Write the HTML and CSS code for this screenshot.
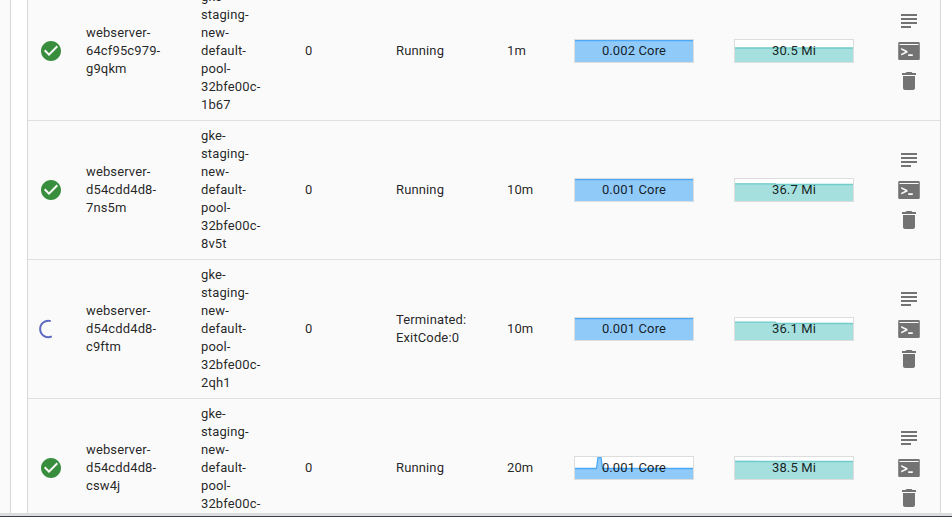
FILE: index.html
```html
<!DOCTYPE html>
<html lang="en">
<head>
<meta charset="utf-8">
<title>Pods</title>
<link rel="stylesheet" href="styles.css">
</head>
<body>
<svg class="defs" width="0" height="0">
  <symbol id="ok" viewBox="0 0 24 24"><path d="M12 2C6.48 2 2 6.48 2 12s4.48 10 10 10 10-4.48 10-10S17.52 2 12 2zm-2 15l-5-5 1.41-1.41L10 14.17l7.59-7.59L19 8l-9 9z"/></symbol>
  <symbol id="logs" viewBox="0 0 24 24"><path d="M14 17H4v2h10v-2zm6-8H4v2h16V9zM4 15h16v-2H4v2zM4 5v2h16V5H4z"/></symbol>
  <symbol id="exec" viewBox="0 0 24 24"><path fill-rule="evenodd" d="M2.500 3h19A1.300 1.300 0 0 1 22.800 4.300v15.400a1.300 1.300 0 0 1-1.300 1.300h-19a1.300 1.300 0 0 1-1.300-1.300V4.300A1.300 1.300 0 0 1 2.500 3zM2.500 5v1h19V5zM4.200 9v1.800l4.200 2-4.200 2v1.800l6.300-3v-1.600zM11.200 15.200V17h4.600v-1.800z"/></symbol>
  <symbol id="trash" viewBox="0 0 24 24"><path d="M6 19c0 1.100.9 2 2 2h8c1.100 0 2-.9 2-2V7H6v12zM19 4h-3.500l-1-1h-5l-1 1H5v2h14V4z"/></symbol>
</svg>
<div class="viewport">
  <div class="nav"></div>
  <main class="card">
    <div class="table">
      <div class="row">
        <div class="status"><svg class="ok"><use href="#ok"/></svg></div>
        <div>webserver-<br>64cf95c979-<br>g9qkm</div>
        <div>gke-<br>staging-<br>new-<br>default-<br>pool-<br>32bfe00c-<br>1b67</div>
        <div>0</div>
        <div>Running</div>
        <div>1m</div>
        <div class="spark cpu"><svg viewBox="0 0 118 22"><path class="area" d="M0 0H118V22H0z"/><path class="line" d="M0 .5H118"/></svg><span>0.002 Core</span></div>
        <div class="spark mem"><svg viewBox="0 0 118 22"><path class="area" d="M0 8H118V22H0z"/><path class="line" d="M0 8H118"/></svg><span>30.5 Mi</span></div>
        <div class="actions"><svg><use href="#logs"/></svg><svg><use href="#exec"/></svg><svg><use href="#trash"/></svg></div>
      </div>
      <div class="row">
        <div class="status"><svg class="ok"><use href="#ok"/></svg></div>
        <div>webserver-<br>d54cdd4d8-<br>7ns5m</div>
        <div>gke-<br>staging-<br>new-<br>default-<br>pool-<br>32bfe00c-<br>8v5t</div>
        <div>0</div>
        <div>Running</div>
        <div>10m</div>
        <div class="spark cpu"><svg viewBox="0 0 118 22"><path class="area" d="M0 0H118V22H0z"/><path class="line" d="M0 .5H118"/></svg><span>0.001 Core</span></div>
        <div class="spark mem"><svg viewBox="0 0 118 22"><path class="area" d="M0 4.500H40L42 5H118V22H0z"/><path class="line" d="M0 4.800H40L42 5.500H118"/></svg><span>36.7 Mi</span></div>
        <div class="actions"><svg><use href="#logs"/></svg><svg><use href="#exec"/></svg><svg><use href="#trash"/></svg></div>
      </div>
      <div class="row">
        <div class="status"><svg class="spinner" viewBox="0 0 24 24"><path d="M14.800 4.150A8.200 8.200 0 1 0 15.800 19.400"/></svg></div>
        <div>webserver-<br>d54cdd4d8-<br>c9ftm</div>
        <div>gke-<br>staging-<br>new-<br>default-<br>pool-<br>32bfe00c-<br>2qh1</div>
        <div>0</div>
        <div>Terminated:<br>ExitCode:0</div>
        <div>10m</div>
        <div class="spark cpu"><svg viewBox="0 0 118 22"><path class="area" d="M0 0H118V22H0z"/><path class="line" d="M0 .5H118"/></svg><span>0.001 Core</span></div>
        <div class="spark mem"><svg viewBox="0 0 118 22"><path class="area" d="M0 4H40L42 5H118V22H0z"/><path class="line" d="M0 4.100H40L42 5.500H118"/></svg><span>36.1 Mi</span></div>
        <div class="actions"><svg><use href="#logs"/></svg><svg><use href="#exec"/></svg><svg><use href="#trash"/></svg></div>
      </div>
      <div class="row">
        <div class="status"><svg class="ok"><use href="#ok"/></svg></div>
        <div>webserver-<br>d54cdd4d8-<br>csw4j</div>
        <div>gke-<br>staging-<br>new-<br>default-<br>pool-<br>32bfe00c-<br>&nbsp;</div>
        <div>0</div>
        <div>Running</div>
        <div>20m</div>
        <div class="spark cpu"><svg viewBox="0 0 118 22"><path class="area" d="M0 11.500H21.500L23 .5H26L27.500 11.500H118V22H0z"/><path class="line" d="M0 11.500H21.500L23 .5H26L27.500 11.500H118"/></svg><span>0.001 Core</span></div>
        <div class="spark mem"><svg viewBox="0 0 118 22"><path class="area" d="M0 3.700H22V4.500H118V22H0z"/><path class="line" d="M0 4.500H118"/></svg><span>38.5 Mi</span></div>
        <div class="actions"><svg><use href="#logs"/></svg><svg><use href="#exec"/></svg><svg><use href="#trash"/></svg></div>
      </div>
    </div>
  </main>
</div>
<footer class="edge"></footer>
</body>
</html>
```

FILE: styles.css
```css
* { box-sizing: border-box; }

body {
  margin: 0;
  height: 517px;
  overflow: hidden;
  background: #fff;
  color: rgba(0, 0, 0, .87);
  font: 13px/18px Roboto, sans-serif;
}

.defs { display: none; }

.viewport {
  display: flex;
  height: 513px;
  overflow: hidden;
}

.nav {
  flex: 0 0 11px;
  background: #fafafa;
  border-right: 1px solid #d8d8d8;
}

.card {
  flex: 1;
  padding: 0 11px 0 16px;
}

.table {
  margin-top: -18px;
  background: #fafafa;
  border: solid #d8d8d8;
  border-width: 0 1px;
}

.row {
  display: grid;
  grid-template-columns: 58px 115px 104px 91px 111px 67px 160px 160px 1fr;
  align-items: center;
  height: 139px;
  padding-bottom: 1px;
  border-bottom: 1px solid #e0e0e0;
  letter-spacing: .13px;
}

.status { padding-left: 11px; }

.status svg {
  display: block;
  width: 24px;
  height: 24px;
}

.ok { fill: #388e3c; }

.status .spinner {
  margin-left: -3px;
  fill: none;
  stroke: #5c6bc0;
  stroke-width: 2;
}

.spark {
  display: grid;
  width: 120px;
  height: 24px;
  border: 1px solid #ddd;
  background: #fff;
  text-align: center;
}

.spark svg,
.spark span { grid-area: 1 / 1; }

.spark svg {
  width: 118px;
  height: 22px;
}

.spark span { line-height: 22px; }

.line { fill: none; stroke-width: 1.3; }
.cpu .area { fill: #90caf9; }
.cpu .line { stroke: #4ba9f5; }
.mem .area { fill: #a5e0df; }
.mem .line { stroke: #70cbc9; }

.actions {
  display: flex;
  flex-direction: column;
  gap: 6px;
  padding-left: 3px;
}

.actions svg {
  width: 24px;
  height: 24px;
  fill: #737373;
}

.edge {
  height: 4px;
  background: #dadce0;
  border-bottom: 1px solid #3c4043;
}
```
